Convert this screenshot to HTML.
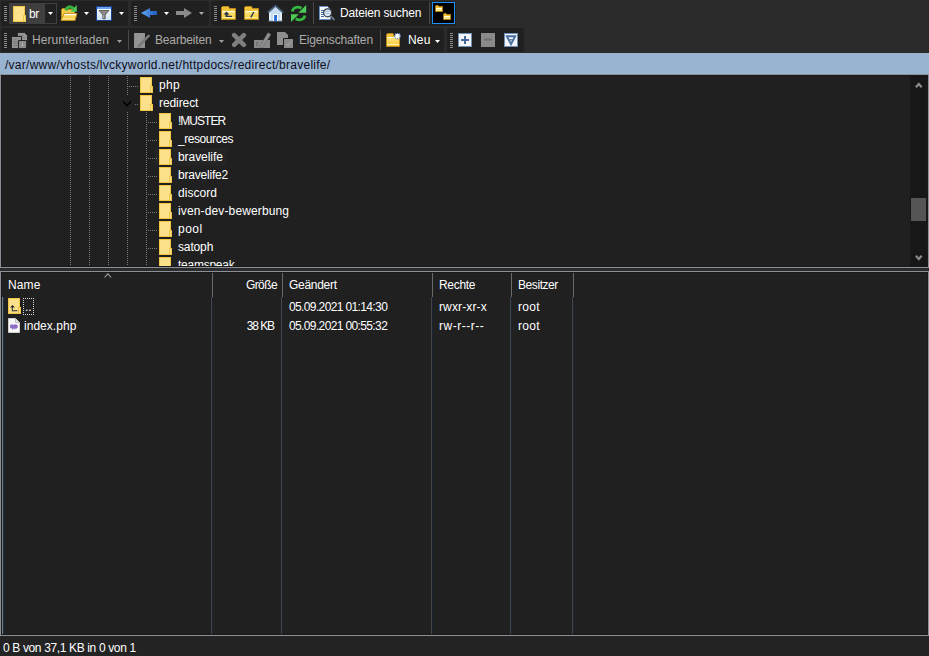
<!DOCTYPE html>
<html><head><meta charset="utf-8"><style>
html,body{margin:0;padding:0}
body{width:929px;height:656px;position:relative;overflow:hidden;background:#2b2b2b;font-family:"Liberation Sans",sans-serif;font-size:12px;color:#ffffff}
.t{position:absolute;white-space:nowrap;line-height:17px}
svg{display:block}
</style></head><body>
<div style="position:absolute;left:1px;top:1px;width:127px;height:25px;background:#202020;border-radius:3px"></div><svg style="position:absolute;left:4px;top:6px" width="3" height="16" viewBox="0 0 3 16"><rect x="0" y="0" width="3" height="1" fill="#8a8a8a"/><rect x="0" y="2" width="3" height="1" fill="#8a8a8a"/><rect x="0" y="4" width="3" height="1" fill="#8a8a8a"/><rect x="0" y="6" width="3" height="1" fill="#8a8a8a"/><rect x="0" y="8" width="3" height="1" fill="#8a8a8a"/><rect x="0" y="10" width="3" height="1" fill="#8a8a8a"/><rect x="0" y="12" width="3" height="1" fill="#8a8a8a"/><rect x="0" y="14" width="3" height="1" fill="#8a8a8a"/></svg><div style="position:absolute;left:9px;top:3px;width:48px;height:21px;background:#3f3f3f"></div><div style="position:absolute;left:45px;top:4px;width:11px;height:19px;background:#212121"></div><svg style="position:absolute;left:13px;top:6px" width="13" height="16" viewBox="0 0 13 16"><rect x="0.5" y="0.5" width="12" height="16" fill="none"/><rect x="0" y="0" width="12" height="16" fill="#141420" opacity="0.0"/><rect x="0" y="0" width="12" height="16" fill="#f4c843"/><rect x="1" y="1" width="10" height="14" fill="#fde28c"/><rect x="10" y="9" width="3" height="7" fill="#f0c848"/><rect x="11" y="10" width="1" height="5" fill="#fde28c"/></svg><div class="t" style="left:29px;top:6px;;letter-spacing:-0.3px">br</div><svg style="position:absolute;left:48px;top:12px" width="5" height="3" viewBox="0 0 5 3"><path d="M0 0H5L2.5 3Z" fill="#ffffff"/></svg><svg style="position:absolute;left:60px;top:5px" width="18" height="17" viewBox="0 0 18 17"><defs><linearGradient id="gof" x1="0" y1="0" x2="0" y2="1"><stop offset="0" stop-color="#ffe680"/><stop offset="1" stop-color="#f2c028"/></linearGradient></defs><path d="M1.5 4.5L2.5 3.5H7L8 4.5H14.5V15.5H1.5Z" fill="#f4cc48" stroke="#b8881a"/><path d="M4 8.5H17L15 15.5H1Z" fill="url(#gof)" stroke="#c08e18"/><path d="M4.5 9.5H16" stroke="#ffffff" stroke-width="1.2"/><path d="M2 14H14.5" stroke="#fff0a8"/><path d="M6 5.5C6.5 1.8 10.5 0.3 13.5 3.8" stroke="#36b040" stroke-width="3.2" fill="none"/><path d="M16.8 0V6.8H10.3Z" fill="#4cc456"/></svg><svg style="position:absolute;left:84px;top:12px" width="5" height="3" viewBox="0 0 5 3"><path d="M0 0H5L2.5 3Z" fill="#ffffff"/></svg><svg style="position:absolute;left:96px;top:6px" width="16" height="15" viewBox="0 0 16 15"><defs><linearGradient id="gfl" x1="0" y1="0" x2="0" y2="1"><stop offset="0" stop-color="#ffffff"/><stop offset="1" stop-color="#cfe0f6"/></linearGradient></defs><rect x="0.5" y="0.5" width="15" height="14" fill="url(#gfl)" stroke="#173f8c"/><rect x="1" y="1" width="14" height="2" fill="#6aa4ee"/><path d="M3 4.5H13L9.2 8.8V12.8H6.8V8.8Z" fill="#8a8a8a" stroke="#505050" stroke-width="0.8"/><path d="M7.5 9.5V12" stroke="#b0b0b0"/></svg><svg style="position:absolute;left:119px;top:12px" width="5" height="3" viewBox="0 0 5 3"><path d="M0 0H5L2.5 3Z" fill="#ffffff"/></svg><div style="position:absolute;left:131px;top:1px;width:78px;height:25px;background:#202020;border-radius:3px"></div><svg style="position:absolute;left:134px;top:6px" width="3" height="16" viewBox="0 0 3 16"><rect x="0" y="0" width="3" height="1" fill="#8a8a8a"/><rect x="0" y="2" width="3" height="1" fill="#8a8a8a"/><rect x="0" y="4" width="3" height="1" fill="#8a8a8a"/><rect x="0" y="6" width="3" height="1" fill="#8a8a8a"/><rect x="0" y="8" width="3" height="1" fill="#8a8a8a"/><rect x="0" y="10" width="3" height="1" fill="#8a8a8a"/><rect x="0" y="12" width="3" height="1" fill="#8a8a8a"/><rect x="0" y="14" width="3" height="1" fill="#8a8a8a"/></svg><svg style="position:absolute;left:141px;top:8px" width="17" height="11" viewBox="0 0 17 11"><defs><linearGradient id="gba" x1="0" y1="0" x2="1" y2="0"><stop offset="0" stop-color="#62a8f6"/><stop offset="1" stop-color="#1e5cb8"/></linearGradient></defs><path d="M0 5L9 0V3H16V7H9V10Z" fill="url(#gba)"/></svg><svg style="position:absolute;left:164px;top:12px" width="5" height="3" viewBox="0 0 5 3"><path d="M0 0H5L2.5 3Z" fill="#ffffff"/></svg><svg style="position:absolute;left:176px;top:8px" width="17" height="11" viewBox="0 0 17 11"><path d="M16 5L8 0V3H0V7H8V10Z" fill="#8a8a8a"/></svg><svg style="position:absolute;left:199px;top:12px" width="5" height="3" viewBox="0 0 5 3"><path d="M0 0H5L2.5 3Z" fill="#a8a8a8"/></svg><div style="position:absolute;left:211px;top:1px;width:245px;height:25px;background:#202020;border-radius:3px"></div><svg style="position:absolute;left:214px;top:6px" width="3" height="16" viewBox="0 0 3 16"><rect x="0" y="0" width="3" height="1" fill="#8a8a8a"/><rect x="0" y="2" width="3" height="1" fill="#8a8a8a"/><rect x="0" y="4" width="3" height="1" fill="#8a8a8a"/><rect x="0" y="6" width="3" height="1" fill="#8a8a8a"/><rect x="0" y="8" width="3" height="1" fill="#8a8a8a"/><rect x="0" y="10" width="3" height="1" fill="#8a8a8a"/><rect x="0" y="12" width="3" height="1" fill="#8a8a8a"/><rect x="0" y="14" width="3" height="1" fill="#8a8a8a"/></svg><svg style="position:absolute;left:221px;top:6px" width="15" height="14" viewBox="0 0 15 14"><defs><linearGradient id="gfd1" x1="0" y1="0" x2="0" y2="1"><stop offset="0" stop-color="#fde88a"/><stop offset="1" stop-color="#f5c830"/></linearGradient></defs><path d="M0.5 1.5L1.5 0.5H7.5L8.5 2.5H14.5V13.5H0.5Z" fill="#f2c23a" stroke="#b8881a"/><rect x="1" y="5" width="13" height="8" fill="url(#gfd1)"/><rect x="1" y="5" width="13" height="1" fill="#fffbe8"/><rect x="1" y="11" width="13" height="1" fill="#fff2b0"/><path d="M5.5 5.5L2.5 8.5H4.5V11H11V9.8H6.5V8.5H8.5Z" fill="#2a3448"/></svg><svg style="position:absolute;left:244px;top:6px" width="15" height="14" viewBox="0 0 15 14"><defs><linearGradient id="gfd2" x1="0" y1="0" x2="0" y2="1"><stop offset="0" stop-color="#fde88a"/><stop offset="1" stop-color="#f5c830"/></linearGradient></defs><path d="M0.5 1.5L1.5 0.5H7.5L8.5 2.5H14.5V13.5H0.5Z" fill="#f2c23a" stroke="#b8881a"/><rect x="1" y="5" width="13" height="8" fill="url(#gfd2)"/><rect x="1" y="5" width="13" height="1" fill="#fffbe8"/><rect x="1" y="11" width="13" height="1" fill="#fff2b0"/><path d="M9.8 6L6.8 11.3" stroke="#2a3448" stroke-width="1.4"/></svg><svg style="position:absolute;left:267px;top:5px" width="17" height="17" viewBox="0 0 17 17"><path d="M8.5 1.5L2 7.5V16H15V7.5Z" fill="#c8dcf2"/><path d="M3 8V15.5H14V8" stroke="#ffffff" fill="none"/><path d="M0.8 7.5L8.5 0.8L16.2 7.5" stroke="#4a6280" stroke-width="1.6" fill="none"/><rect x="1.5" y="15.5" width="14" height="1" fill="#6a88a8"/><rect x="6" y="9" width="5" height="7" fill="#ffffff"/><rect x="7" y="10" width="3" height="6" fill="#2f73d8"/></svg><svg style="position:absolute;left:290px;top:5px" width="17" height="17" viewBox="0 0 17 17"><path d="M2.3 6.5C3 2.5 7.5 1 11.5 3.2" stroke="#34b840" stroke-width="2.8" fill="none"/><path d="M16.2 0V7.8H8.4Z" fill="#4ccc56"/><g transform="rotate(180 8.6 8.5)"><path d="M2.3 6.5C3 2.5 7.5 1 11.5 3.2" stroke="#34b840" stroke-width="2.8" fill="none"/><path d="M16.2 0V7.8H8.4Z" fill="#4ccc56"/></g></svg><div style="position:absolute;left:313px;top:2px;width:1px;height:22px;background:#4a4a4a"></div><svg style="position:absolute;left:319px;top:5px" width="17" height="17" viewBox="0 0 17 17"><path d="M0.5 1.5H8.5L11.5 4.5V14.5H0.5Z" fill="#f6f9fd" stroke="#6a90c2"/><path d="M2 5.5H5M2 7.5H5M2 9.5H5M2 11.5H5" stroke="#3a6aa8"/><circle cx="8.6" cy="7.8" r="4" fill="#dce9f8" stroke="#343c48" stroke-width="1.2"/><path d="M6.5 6.5H10.5M6.5 8.5H10.5" stroke="#a8bcd0"/><path d="M11.8 11.2L15.5 15" stroke="#6a7888" stroke-width="1.8"/></svg><div class="t" style="left:340px;top:5px;;letter-spacing:-0.154px">Dateien suchen</div><div style="position:absolute;left:429px;top:2px;width:1px;height:22px;background:#4a4a4a"></div><div style="position:absolute;left:432px;top:2px;width:23px;height:22px;background:#000;box-sizing:border-box;border:1px solid #1e8fff"></div><svg style="position:absolute;left:435px;top:5px" width="8" height="7" viewBox="0 0 8 7"><path d="M0.5 1.5L1 0.5H3L4 1.5H7.5V6.5H0.5Z" fill="#f0c030" stroke="#b08018"/><rect x="1" y="3" width="6" height="3" fill="#fde888"/><rect x="1" y="3" width="6" height="1" fill="#fffbe0"/></svg><svg style="position:absolute;left:443px;top:13px" width="8" height="7" viewBox="0 0 8 7"><path d="M0.5 1.5L1 0.5H3L4 1.5H7.5V6.5H0.5Z" fill="#f0c030" stroke="#b08018"/><rect x="1" y="3" width="6" height="3" fill="#fde888"/><rect x="1" y="3" width="6" height="1" fill="#fffbe0"/></svg><div style="position:absolute;left:1px;top:28px;width:443px;height:24px;background:#202020;border-radius:3px"></div><svg style="position:absolute;left:4px;top:33px" width="3" height="16" viewBox="0 0 3 16"><rect x="0" y="0" width="3" height="1" fill="#8a8a8a"/><rect x="0" y="2" width="3" height="1" fill="#8a8a8a"/><rect x="0" y="4" width="3" height="1" fill="#8a8a8a"/><rect x="0" y="6" width="3" height="1" fill="#8a8a8a"/><rect x="0" y="8" width="3" height="1" fill="#8a8a8a"/><rect x="0" y="10" width="3" height="1" fill="#8a8a8a"/><rect x="0" y="12" width="3" height="1" fill="#8a8a8a"/><rect x="0" y="14" width="3" height="1" fill="#8a8a8a"/></svg><svg style="position:absolute;left:11px;top:32px" width="17" height="17" viewBox="0 0 17 17"><path d="M6.5 0.5H13.5L16.5 3.5V12.5H6.5Z" fill="#969696" stroke="#262626"/><path d="M8.5 3.5H12.5M8.5 5.5H14.5" stroke="#7c7c7c"/><path d="M0.5 4.5H10.5V16.5H0.5Z" fill="#929292" stroke="#262626"/><path d="M2.5 7.5H5.5M2.5 9.5H7.5M2.5 11.5H7.5M2.5 13.5H7.5" stroke="#7a7a7a"/><path d="M7.5 8.5H15.5V16.5H7.5Z" fill="#8a8a8a" stroke="#262626"/><path d="M11.5 10V14M9.8 12.5L11.5 14.2L13.2 12.5" stroke="#a8a8a8" fill="none"/></svg><div class="t" style="left:32px;top:32px;color:#ababab;letter-spacing:0.083px">Herunterladen</div><svg style="position:absolute;left:117px;top:40px" width="5" height="3" viewBox="0 0 5 3"><path d="M0 0H5L2.5 3Z" fill="#a0a0a0"/></svg><div style="position:absolute;left:128px;top:30px;width:1px;height:20px;background:#4a4a4a"></div><svg style="position:absolute;left:134px;top:32px" width="17" height="17" viewBox="0 0 17 17"><path d="M0 1H11V16H0Z" fill="#8e8e8e"/><path d="M1 1H10V15H1Z" fill="#949494"/><path d="M4.5 13L14.5 2.5L16 4L6 14.5L4 15Z" fill="#7e7e7e" stroke="#6a6a6a" stroke-width="0.6"/></svg><div class="t" style="left:155px;top:32px;color:#ababab;letter-spacing:-0.156px">Bearbeiten</div><svg style="position:absolute;left:219px;top:40px" width="5" height="3" viewBox="0 0 5 3"><path d="M0 0H5L2.5 3Z" fill="#a0a0a0"/></svg><svg style="position:absolute;left:231px;top:32px" width="16" height="16" viewBox="0 0 16 16"><path d="M3.2 3.2L12.8 12.8M12.8 3.2L3.2 12.8" stroke="#7e7e7e" stroke-width="4.6" stroke-linecap="round"/></svg><svg style="position:absolute;left:254px;top:32px" width="17" height="17" viewBox="0 0 17 17"><path d="M0 8H16V16H0Z" fill="#8a8a8a"/><path d="M5.5 15L14 0.8L16.8 2.4L8.3 16Z" fill="#909090" stroke="#6e6e6e" stroke-width="0.7"/><path d="M3 10.5V13.5M2 10.5H4M2 13.5H4" stroke="#6a6a6a"/></svg><svg style="position:absolute;left:277px;top:32px" width="17" height="17" viewBox="0 0 17 17"><path d="M0 0H8L11 3V13H0Z" fill="#8e8e8e"/><path d="M6.5 6.5H16.5V16.5H6.5Z" fill="#8a8a8a" stroke="#1e1e1e"/><path d="M9 11.5L11 13.5L14.5 9" stroke="#a8a8a8" fill="none"/></svg><div class="t" style="left:299px;top:32px;color:#ababab;letter-spacing:-0.167px">Eigenschaften</div><div style="position:absolute;left:380px;top:30px;width:1px;height:20px;background:#4a4a4a"></div><svg style="position:absolute;left:385px;top:33px" width="17" height="15" viewBox="0 0 17 15"><defs><linearGradient id="gnf" x1="0" y1="0" x2="0" y2="1"><stop offset="0" stop-color="#fde88a"/><stop offset="1" stop-color="#f5c830"/></linearGradient></defs><path d="M1.5 1.5L2.5 0.5H8L9 3.5H14.5V13.5H1.5Z" fill="#f2c23a" stroke="#b8881a"/><rect x="2" y="4" width="12" height="9" fill="url(#gnf)"/><rect x="2" y="4" width="12" height="1" fill="#fffbe8"/><rect x="2" y="11" width="12" height="1" fill="#fff2b0"/><path d="M12.5 -0.5V6.5M9 3H16M10 0.5L15 5.5M15 0.5L10 5.5" stroke="#6f94c4" stroke-width="1.3"/><circle cx="12.5" cy="3" r="2.3" fill="#ffffff"/></svg><div class="t" style="left:408px;top:32px;;letter-spacing:0.2px">Neu</div><svg style="position:absolute;left:435px;top:40px" width="5" height="3" viewBox="0 0 5 3"><path d="M0 0H5L2.5 3Z" fill="#ffffff"/></svg><div style="position:absolute;left:447px;top:28px;width:77px;height:24px;background:#202020;border-radius:3px"></div><svg style="position:absolute;left:450px;top:33px" width="3" height="16" viewBox="0 0 3 16"><rect x="0" y="0" width="3" height="1" fill="#8a8a8a"/><rect x="0" y="2" width="3" height="1" fill="#8a8a8a"/><rect x="0" y="4" width="3" height="1" fill="#8a8a8a"/><rect x="0" y="6" width="3" height="1" fill="#8a8a8a"/><rect x="0" y="8" width="3" height="1" fill="#8a8a8a"/><rect x="0" y="10" width="3" height="1" fill="#8a8a8a"/><rect x="0" y="12" width="3" height="1" fill="#8a8a8a"/><rect x="0" y="14" width="3" height="1" fill="#8a8a8a"/></svg><svg style="position:absolute;left:458px;top:33px" width="14" height="14" viewBox="0 0 14 14"><rect x="0.5" y="0.5" width="13" height="13" fill="#f2f6fc" stroke="#7090b8"/><path d="M7 3V11M3 7H11" stroke="#44699a" stroke-width="2"/></svg><svg style="position:absolute;left:481px;top:33px" width="14" height="14" viewBox="0 0 14 14"><rect x="0" y="0" width="14" height="14" fill="#8a8a8a"/><path d="M3 6.5H11" stroke="#6e6e6e" stroke-width="2"/></svg><svg style="position:absolute;left:504px;top:33px" width="14" height="14" viewBox="0 0 14 14"><rect x="0.5" y="0.5" width="13" height="13" fill="#f2f6fc" stroke="#7090b8"/><path d="M2.8 3.3H11.2L7 11.2Z" fill="none" stroke="#4a6e9e" stroke-width="1.9" stroke-linejoin="miter"/><path d="M5.2 6.8H8.8" stroke="#4a6e9e" stroke-width="1.3"/></svg><div style="position:absolute;left:0px;top:53px;width:929px;height:21px;background:#99b4d1"></div><div class="t" style="left:5px;top:57px;color:#0c0c1a;letter-spacing:0.259px">/var/www/vhosts/lvckyworld.net/httpdocs/redirect/bravelife/</div><div style="position:absolute;left:0px;top:74px;width:929px;height:194px;box-sizing:border-box;border:1px solid #8b9098;background:#1a1a1a"></div><div style="position:absolute;left:2px;top:76px;width:908px;height:190px;background:#202020"></div><div style="position:absolute;left:910px;top:76px;width:17px;height:190px;background:#171717"></div><svg style="position:absolute;left:915px;top:82px" width="8" height="6" viewBox="0 0 8 6"><path d="M0.9 5.2L3.8 2L6.7 5.2" stroke="#8a8a8a" stroke-width="2.2" fill="none"/></svg><svg style="position:absolute;left:915px;top:255px" width="8" height="6" viewBox="0 0 8 6"><path d="M0.9 0.8L3.8 4L6.7 0.8" stroke="#8a8a8a" stroke-width="2.2" fill="none"/></svg><div style="position:absolute;left:911px;top:198px;width:15px;height:23px;background:#555555"></div><div style="position:absolute;left:2px;top:76px;width:908px;height:190px;overflow:hidden"><svg style="position:absolute;left:68px;top:0px" width="1" height="190"><rect x="0" y="0" width="1" height="1" fill="#7a7a7a"/><rect x="0" y="2" width="1" height="1" fill="#7a7a7a"/><rect x="0" y="4" width="1" height="1" fill="#7a7a7a"/><rect x="0" y="6" width="1" height="1" fill="#7a7a7a"/><rect x="0" y="8" width="1" height="1" fill="#7a7a7a"/><rect x="0" y="10" width="1" height="1" fill="#7a7a7a"/><rect x="0" y="12" width="1" height="1" fill="#7a7a7a"/><rect x="0" y="14" width="1" height="1" fill="#7a7a7a"/><rect x="0" y="16" width="1" height="1" fill="#7a7a7a"/><rect x="0" y="18" width="1" height="1" fill="#7a7a7a"/><rect x="0" y="20" width="1" height="1" fill="#7a7a7a"/><rect x="0" y="22" width="1" height="1" fill="#7a7a7a"/><rect x="0" y="24" width="1" height="1" fill="#7a7a7a"/><rect x="0" y="26" width="1" height="1" fill="#7a7a7a"/><rect x="0" y="28" width="1" height="1" fill="#7a7a7a"/><rect x="0" y="30" width="1" height="1" fill="#7a7a7a"/><rect x="0" y="32" width="1" height="1" fill="#7a7a7a"/><rect x="0" y="34" width="1" height="1" fill="#7a7a7a"/><rect x="0" y="36" width="1" height="1" fill="#7a7a7a"/><rect x="0" y="38" width="1" height="1" fill="#7a7a7a"/><rect x="0" y="40" width="1" height="1" fill="#7a7a7a"/><rect x="0" y="42" width="1" height="1" fill="#7a7a7a"/><rect x="0" y="44" width="1" height="1" fill="#7a7a7a"/><rect x="0" y="46" width="1" height="1" fill="#7a7a7a"/><rect x="0" y="48" width="1" height="1" fill="#7a7a7a"/><rect x="0" y="50" width="1" height="1" fill="#7a7a7a"/><rect x="0" y="52" width="1" height="1" fill="#7a7a7a"/><rect x="0" y="54" width="1" height="1" fill="#7a7a7a"/><rect x="0" y="56" width="1" height="1" fill="#7a7a7a"/><rect x="0" y="58" width="1" height="1" fill="#7a7a7a"/><rect x="0" y="60" width="1" height="1" fill="#7a7a7a"/><rect x="0" y="62" width="1" height="1" fill="#7a7a7a"/><rect x="0" y="64" width="1" height="1" fill="#7a7a7a"/><rect x="0" y="66" width="1" height="1" fill="#7a7a7a"/><rect x="0" y="68" width="1" height="1" fill="#7a7a7a"/><rect x="0" y="70" width="1" height="1" fill="#7a7a7a"/><rect x="0" y="72" width="1" height="1" fill="#7a7a7a"/><rect x="0" y="74" width="1" height="1" fill="#7a7a7a"/><rect x="0" y="76" width="1" height="1" fill="#7a7a7a"/><rect x="0" y="78" width="1" height="1" fill="#7a7a7a"/><rect x="0" y="80" width="1" height="1" fill="#7a7a7a"/><rect x="0" y="82" width="1" height="1" fill="#7a7a7a"/><rect x="0" y="84" width="1" height="1" fill="#7a7a7a"/><rect x="0" y="86" width="1" height="1" fill="#7a7a7a"/><rect x="0" y="88" width="1" height="1" fill="#7a7a7a"/><rect x="0" y="90" width="1" height="1" fill="#7a7a7a"/><rect x="0" y="92" width="1" height="1" fill="#7a7a7a"/><rect x="0" y="94" width="1" height="1" fill="#7a7a7a"/><rect x="0" y="96" width="1" height="1" fill="#7a7a7a"/><rect x="0" y="98" width="1" height="1" fill="#7a7a7a"/><rect x="0" y="100" width="1" height="1" fill="#7a7a7a"/><rect x="0" y="102" width="1" height="1" fill="#7a7a7a"/><rect x="0" y="104" width="1" height="1" fill="#7a7a7a"/><rect x="0" y="106" width="1" height="1" fill="#7a7a7a"/><rect x="0" y="108" width="1" height="1" fill="#7a7a7a"/><rect x="0" y="110" width="1" height="1" fill="#7a7a7a"/><rect x="0" y="112" width="1" height="1" fill="#7a7a7a"/><rect x="0" y="114" width="1" height="1" fill="#7a7a7a"/><rect x="0" y="116" width="1" height="1" fill="#7a7a7a"/><rect x="0" y="118" width="1" height="1" fill="#7a7a7a"/><rect x="0" y="120" width="1" height="1" fill="#7a7a7a"/><rect x="0" y="122" width="1" height="1" fill="#7a7a7a"/><rect x="0" y="124" width="1" height="1" fill="#7a7a7a"/><rect x="0" y="126" width="1" height="1" fill="#7a7a7a"/><rect x="0" y="128" width="1" height="1" fill="#7a7a7a"/><rect x="0" y="130" width="1" height="1" fill="#7a7a7a"/><rect x="0" y="132" width="1" height="1" fill="#7a7a7a"/><rect x="0" y="134" width="1" height="1" fill="#7a7a7a"/><rect x="0" y="136" width="1" height="1" fill="#7a7a7a"/><rect x="0" y="138" width="1" height="1" fill="#7a7a7a"/><rect x="0" y="140" width="1" height="1" fill="#7a7a7a"/><rect x="0" y="142" width="1" height="1" fill="#7a7a7a"/><rect x="0" y="144" width="1" height="1" fill="#7a7a7a"/><rect x="0" y="146" width="1" height="1" fill="#7a7a7a"/><rect x="0" y="148" width="1" height="1" fill="#7a7a7a"/><rect x="0" y="150" width="1" height="1" fill="#7a7a7a"/><rect x="0" y="152" width="1" height="1" fill="#7a7a7a"/><rect x="0" y="154" width="1" height="1" fill="#7a7a7a"/><rect x="0" y="156" width="1" height="1" fill="#7a7a7a"/><rect x="0" y="158" width="1" height="1" fill="#7a7a7a"/><rect x="0" y="160" width="1" height="1" fill="#7a7a7a"/><rect x="0" y="162" width="1" height="1" fill="#7a7a7a"/><rect x="0" y="164" width="1" height="1" fill="#7a7a7a"/><rect x="0" y="166" width="1" height="1" fill="#7a7a7a"/><rect x="0" y="168" width="1" height="1" fill="#7a7a7a"/><rect x="0" y="170" width="1" height="1" fill="#7a7a7a"/><rect x="0" y="172" width="1" height="1" fill="#7a7a7a"/><rect x="0" y="174" width="1" height="1" fill="#7a7a7a"/><rect x="0" y="176" width="1" height="1" fill="#7a7a7a"/><rect x="0" y="178" width="1" height="1" fill="#7a7a7a"/><rect x="0" y="180" width="1" height="1" fill="#7a7a7a"/><rect x="0" y="182" width="1" height="1" fill="#7a7a7a"/><rect x="0" y="184" width="1" height="1" fill="#7a7a7a"/><rect x="0" y="186" width="1" height="1" fill="#7a7a7a"/><rect x="0" y="188" width="1" height="1" fill="#7a7a7a"/></svg><svg style="position:absolute;left:87px;top:0px" width="1" height="190"><rect x="0" y="0" width="1" height="1" fill="#7a7a7a"/><rect x="0" y="2" width="1" height="1" fill="#7a7a7a"/><rect x="0" y="4" width="1" height="1" fill="#7a7a7a"/><rect x="0" y="6" width="1" height="1" fill="#7a7a7a"/><rect x="0" y="8" width="1" height="1" fill="#7a7a7a"/><rect x="0" y="10" width="1" height="1" fill="#7a7a7a"/><rect x="0" y="12" width="1" height="1" fill="#7a7a7a"/><rect x="0" y="14" width="1" height="1" fill="#7a7a7a"/><rect x="0" y="16" width="1" height="1" fill="#7a7a7a"/><rect x="0" y="18" width="1" height="1" fill="#7a7a7a"/><rect x="0" y="20" width="1" height="1" fill="#7a7a7a"/><rect x="0" y="22" width="1" height="1" fill="#7a7a7a"/><rect x="0" y="24" width="1" height="1" fill="#7a7a7a"/><rect x="0" y="26" width="1" height="1" fill="#7a7a7a"/><rect x="0" y="28" width="1" height="1" fill="#7a7a7a"/><rect x="0" y="30" width="1" height="1" fill="#7a7a7a"/><rect x="0" y="32" width="1" height="1" fill="#7a7a7a"/><rect x="0" y="34" width="1" height="1" fill="#7a7a7a"/><rect x="0" y="36" width="1" height="1" fill="#7a7a7a"/><rect x="0" y="38" width="1" height="1" fill="#7a7a7a"/><rect x="0" y="40" width="1" height="1" fill="#7a7a7a"/><rect x="0" y="42" width="1" height="1" fill="#7a7a7a"/><rect x="0" y="44" width="1" height="1" fill="#7a7a7a"/><rect x="0" y="46" width="1" height="1" fill="#7a7a7a"/><rect x="0" y="48" width="1" height="1" fill="#7a7a7a"/><rect x="0" y="50" width="1" height="1" fill="#7a7a7a"/><rect x="0" y="52" width="1" height="1" fill="#7a7a7a"/><rect x="0" y="54" width="1" height="1" fill="#7a7a7a"/><rect x="0" y="56" width="1" height="1" fill="#7a7a7a"/><rect x="0" y="58" width="1" height="1" fill="#7a7a7a"/><rect x="0" y="60" width="1" height="1" fill="#7a7a7a"/><rect x="0" y="62" width="1" height="1" fill="#7a7a7a"/><rect x="0" y="64" width="1" height="1" fill="#7a7a7a"/><rect x="0" y="66" width="1" height="1" fill="#7a7a7a"/><rect x="0" y="68" width="1" height="1" fill="#7a7a7a"/><rect x="0" y="70" width="1" height="1" fill="#7a7a7a"/><rect x="0" y="72" width="1" height="1" fill="#7a7a7a"/><rect x="0" y="74" width="1" height="1" fill="#7a7a7a"/><rect x="0" y="76" width="1" height="1" fill="#7a7a7a"/><rect x="0" y="78" width="1" height="1" fill="#7a7a7a"/><rect x="0" y="80" width="1" height="1" fill="#7a7a7a"/><rect x="0" y="82" width="1" height="1" fill="#7a7a7a"/><rect x="0" y="84" width="1" height="1" fill="#7a7a7a"/><rect x="0" y="86" width="1" height="1" fill="#7a7a7a"/><rect x="0" y="88" width="1" height="1" fill="#7a7a7a"/><rect x="0" y="90" width="1" height="1" fill="#7a7a7a"/><rect x="0" y="92" width="1" height="1" fill="#7a7a7a"/><rect x="0" y="94" width="1" height="1" fill="#7a7a7a"/><rect x="0" y="96" width="1" height="1" fill="#7a7a7a"/><rect x="0" y="98" width="1" height="1" fill="#7a7a7a"/><rect x="0" y="100" width="1" height="1" fill="#7a7a7a"/><rect x="0" y="102" width="1" height="1" fill="#7a7a7a"/><rect x="0" y="104" width="1" height="1" fill="#7a7a7a"/><rect x="0" y="106" width="1" height="1" fill="#7a7a7a"/><rect x="0" y="108" width="1" height="1" fill="#7a7a7a"/><rect x="0" y="110" width="1" height="1" fill="#7a7a7a"/><rect x="0" y="112" width="1" height="1" fill="#7a7a7a"/><rect x="0" y="114" width="1" height="1" fill="#7a7a7a"/><rect x="0" y="116" width="1" height="1" fill="#7a7a7a"/><rect x="0" y="118" width="1" height="1" fill="#7a7a7a"/><rect x="0" y="120" width="1" height="1" fill="#7a7a7a"/><rect x="0" y="122" width="1" height="1" fill="#7a7a7a"/><rect x="0" y="124" width="1" height="1" fill="#7a7a7a"/><rect x="0" y="126" width="1" height="1" fill="#7a7a7a"/><rect x="0" y="128" width="1" height="1" fill="#7a7a7a"/><rect x="0" y="130" width="1" height="1" fill="#7a7a7a"/><rect x="0" y="132" width="1" height="1" fill="#7a7a7a"/><rect x="0" y="134" width="1" height="1" fill="#7a7a7a"/><rect x="0" y="136" width="1" height="1" fill="#7a7a7a"/><rect x="0" y="138" width="1" height="1" fill="#7a7a7a"/><rect x="0" y="140" width="1" height="1" fill="#7a7a7a"/><rect x="0" y="142" width="1" height="1" fill="#7a7a7a"/><rect x="0" y="144" width="1" height="1" fill="#7a7a7a"/><rect x="0" y="146" width="1" height="1" fill="#7a7a7a"/><rect x="0" y="148" width="1" height="1" fill="#7a7a7a"/><rect x="0" y="150" width="1" height="1" fill="#7a7a7a"/><rect x="0" y="152" width="1" height="1" fill="#7a7a7a"/><rect x="0" y="154" width="1" height="1" fill="#7a7a7a"/><rect x="0" y="156" width="1" height="1" fill="#7a7a7a"/><rect x="0" y="158" width="1" height="1" fill="#7a7a7a"/><rect x="0" y="160" width="1" height="1" fill="#7a7a7a"/><rect x="0" y="162" width="1" height="1" fill="#7a7a7a"/><rect x="0" y="164" width="1" height="1" fill="#7a7a7a"/><rect x="0" y="166" width="1" height="1" fill="#7a7a7a"/><rect x="0" y="168" width="1" height="1" fill="#7a7a7a"/><rect x="0" y="170" width="1" height="1" fill="#7a7a7a"/><rect x="0" y="172" width="1" height="1" fill="#7a7a7a"/><rect x="0" y="174" width="1" height="1" fill="#7a7a7a"/><rect x="0" y="176" width="1" height="1" fill="#7a7a7a"/><rect x="0" y="178" width="1" height="1" fill="#7a7a7a"/><rect x="0" y="180" width="1" height="1" fill="#7a7a7a"/><rect x="0" y="182" width="1" height="1" fill="#7a7a7a"/><rect x="0" y="184" width="1" height="1" fill="#7a7a7a"/><rect x="0" y="186" width="1" height="1" fill="#7a7a7a"/><rect x="0" y="188" width="1" height="1" fill="#7a7a7a"/></svg><svg style="position:absolute;left:106px;top:0px" width="1" height="190"><rect x="0" y="0" width="1" height="1" fill="#7a7a7a"/><rect x="0" y="2" width="1" height="1" fill="#7a7a7a"/><rect x="0" y="4" width="1" height="1" fill="#7a7a7a"/><rect x="0" y="6" width="1" height="1" fill="#7a7a7a"/><rect x="0" y="8" width="1" height="1" fill="#7a7a7a"/><rect x="0" y="10" width="1" height="1" fill="#7a7a7a"/><rect x="0" y="12" width="1" height="1" fill="#7a7a7a"/><rect x="0" y="14" width="1" height="1" fill="#7a7a7a"/><rect x="0" y="16" width="1" height="1" fill="#7a7a7a"/><rect x="0" y="18" width="1" height="1" fill="#7a7a7a"/><rect x="0" y="20" width="1" height="1" fill="#7a7a7a"/><rect x="0" y="22" width="1" height="1" fill="#7a7a7a"/><rect x="0" y="24" width="1" height="1" fill="#7a7a7a"/><rect x="0" y="26" width="1" height="1" fill="#7a7a7a"/><rect x="0" y="28" width="1" height="1" fill="#7a7a7a"/><rect x="0" y="30" width="1" height="1" fill="#7a7a7a"/><rect x="0" y="32" width="1" height="1" fill="#7a7a7a"/><rect x="0" y="34" width="1" height="1" fill="#7a7a7a"/><rect x="0" y="36" width="1" height="1" fill="#7a7a7a"/><rect x="0" y="38" width="1" height="1" fill="#7a7a7a"/><rect x="0" y="40" width="1" height="1" fill="#7a7a7a"/><rect x="0" y="42" width="1" height="1" fill="#7a7a7a"/><rect x="0" y="44" width="1" height="1" fill="#7a7a7a"/><rect x="0" y="46" width="1" height="1" fill="#7a7a7a"/><rect x="0" y="48" width="1" height="1" fill="#7a7a7a"/><rect x="0" y="50" width="1" height="1" fill="#7a7a7a"/><rect x="0" y="52" width="1" height="1" fill="#7a7a7a"/><rect x="0" y="54" width="1" height="1" fill="#7a7a7a"/><rect x="0" y="56" width="1" height="1" fill="#7a7a7a"/><rect x="0" y="58" width="1" height="1" fill="#7a7a7a"/><rect x="0" y="60" width="1" height="1" fill="#7a7a7a"/><rect x="0" y="62" width="1" height="1" fill="#7a7a7a"/><rect x="0" y="64" width="1" height="1" fill="#7a7a7a"/><rect x="0" y="66" width="1" height="1" fill="#7a7a7a"/><rect x="0" y="68" width="1" height="1" fill="#7a7a7a"/><rect x="0" y="70" width="1" height="1" fill="#7a7a7a"/><rect x="0" y="72" width="1" height="1" fill="#7a7a7a"/><rect x="0" y="74" width="1" height="1" fill="#7a7a7a"/><rect x="0" y="76" width="1" height="1" fill="#7a7a7a"/><rect x="0" y="78" width="1" height="1" fill="#7a7a7a"/><rect x="0" y="80" width="1" height="1" fill="#7a7a7a"/><rect x="0" y="82" width="1" height="1" fill="#7a7a7a"/><rect x="0" y="84" width="1" height="1" fill="#7a7a7a"/><rect x="0" y="86" width="1" height="1" fill="#7a7a7a"/><rect x="0" y="88" width="1" height="1" fill="#7a7a7a"/><rect x="0" y="90" width="1" height="1" fill="#7a7a7a"/><rect x="0" y="92" width="1" height="1" fill="#7a7a7a"/><rect x="0" y="94" width="1" height="1" fill="#7a7a7a"/><rect x="0" y="96" width="1" height="1" fill="#7a7a7a"/><rect x="0" y="98" width="1" height="1" fill="#7a7a7a"/><rect x="0" y="100" width="1" height="1" fill="#7a7a7a"/><rect x="0" y="102" width="1" height="1" fill="#7a7a7a"/><rect x="0" y="104" width="1" height="1" fill="#7a7a7a"/><rect x="0" y="106" width="1" height="1" fill="#7a7a7a"/><rect x="0" y="108" width="1" height="1" fill="#7a7a7a"/><rect x="0" y="110" width="1" height="1" fill="#7a7a7a"/><rect x="0" y="112" width="1" height="1" fill="#7a7a7a"/><rect x="0" y="114" width="1" height="1" fill="#7a7a7a"/><rect x="0" y="116" width="1" height="1" fill="#7a7a7a"/><rect x="0" y="118" width="1" height="1" fill="#7a7a7a"/><rect x="0" y="120" width="1" height="1" fill="#7a7a7a"/><rect x="0" y="122" width="1" height="1" fill="#7a7a7a"/><rect x="0" y="124" width="1" height="1" fill="#7a7a7a"/><rect x="0" y="126" width="1" height="1" fill="#7a7a7a"/><rect x="0" y="128" width="1" height="1" fill="#7a7a7a"/><rect x="0" y="130" width="1" height="1" fill="#7a7a7a"/><rect x="0" y="132" width="1" height="1" fill="#7a7a7a"/><rect x="0" y="134" width="1" height="1" fill="#7a7a7a"/><rect x="0" y="136" width="1" height="1" fill="#7a7a7a"/><rect x="0" y="138" width="1" height="1" fill="#7a7a7a"/><rect x="0" y="140" width="1" height="1" fill="#7a7a7a"/><rect x="0" y="142" width="1" height="1" fill="#7a7a7a"/><rect x="0" y="144" width="1" height="1" fill="#7a7a7a"/><rect x="0" y="146" width="1" height="1" fill="#7a7a7a"/><rect x="0" y="148" width="1" height="1" fill="#7a7a7a"/><rect x="0" y="150" width="1" height="1" fill="#7a7a7a"/><rect x="0" y="152" width="1" height="1" fill="#7a7a7a"/><rect x="0" y="154" width="1" height="1" fill="#7a7a7a"/><rect x="0" y="156" width="1" height="1" fill="#7a7a7a"/><rect x="0" y="158" width="1" height="1" fill="#7a7a7a"/><rect x="0" y="160" width="1" height="1" fill="#7a7a7a"/><rect x="0" y="162" width="1" height="1" fill="#7a7a7a"/><rect x="0" y="164" width="1" height="1" fill="#7a7a7a"/><rect x="0" y="166" width="1" height="1" fill="#7a7a7a"/><rect x="0" y="168" width="1" height="1" fill="#7a7a7a"/><rect x="0" y="170" width="1" height="1" fill="#7a7a7a"/><rect x="0" y="172" width="1" height="1" fill="#7a7a7a"/><rect x="0" y="174" width="1" height="1" fill="#7a7a7a"/><rect x="0" y="176" width="1" height="1" fill="#7a7a7a"/><rect x="0" y="178" width="1" height="1" fill="#7a7a7a"/><rect x="0" y="180" width="1" height="1" fill="#7a7a7a"/><rect x="0" y="182" width="1" height="1" fill="#7a7a7a"/><rect x="0" y="184" width="1" height="1" fill="#7a7a7a"/><rect x="0" y="186" width="1" height="1" fill="#7a7a7a"/><rect x="0" y="188" width="1" height="1" fill="#7a7a7a"/></svg><svg style="position:absolute;left:125px;top:0px" width="1" height="20"><rect x="0" y="0" width="1" height="1" fill="#7a7a7a"/><rect x="0" y="2" width="1" height="1" fill="#7a7a7a"/><rect x="0" y="4" width="1" height="1" fill="#7a7a7a"/><rect x="0" y="6" width="1" height="1" fill="#7a7a7a"/><rect x="0" y="8" width="1" height="1" fill="#7a7a7a"/><rect x="0" y="10" width="1" height="1" fill="#7a7a7a"/><rect x="0" y="12" width="1" height="1" fill="#7a7a7a"/><rect x="0" y="14" width="1" height="1" fill="#7a7a7a"/><rect x="0" y="16" width="1" height="1" fill="#7a7a7a"/><rect x="0" y="18" width="1" height="1" fill="#7a7a7a"/></svg><svg style="position:absolute;left:125px;top:36px" width="1" height="154"><rect x="0" y="0" width="1" height="1" fill="#7a7a7a"/><rect x="0" y="2" width="1" height="1" fill="#7a7a7a"/><rect x="0" y="4" width="1" height="1" fill="#7a7a7a"/><rect x="0" y="6" width="1" height="1" fill="#7a7a7a"/><rect x="0" y="8" width="1" height="1" fill="#7a7a7a"/><rect x="0" y="10" width="1" height="1" fill="#7a7a7a"/><rect x="0" y="12" width="1" height="1" fill="#7a7a7a"/><rect x="0" y="14" width="1" height="1" fill="#7a7a7a"/><rect x="0" y="16" width="1" height="1" fill="#7a7a7a"/><rect x="0" y="18" width="1" height="1" fill="#7a7a7a"/><rect x="0" y="20" width="1" height="1" fill="#7a7a7a"/><rect x="0" y="22" width="1" height="1" fill="#7a7a7a"/><rect x="0" y="24" width="1" height="1" fill="#7a7a7a"/><rect x="0" y="26" width="1" height="1" fill="#7a7a7a"/><rect x="0" y="28" width="1" height="1" fill="#7a7a7a"/><rect x="0" y="30" width="1" height="1" fill="#7a7a7a"/><rect x="0" y="32" width="1" height="1" fill="#7a7a7a"/><rect x="0" y="34" width="1" height="1" fill="#7a7a7a"/><rect x="0" y="36" width="1" height="1" fill="#7a7a7a"/><rect x="0" y="38" width="1" height="1" fill="#7a7a7a"/><rect x="0" y="40" width="1" height="1" fill="#7a7a7a"/><rect x="0" y="42" width="1" height="1" fill="#7a7a7a"/><rect x="0" y="44" width="1" height="1" fill="#7a7a7a"/><rect x="0" y="46" width="1" height="1" fill="#7a7a7a"/><rect x="0" y="48" width="1" height="1" fill="#7a7a7a"/><rect x="0" y="50" width="1" height="1" fill="#7a7a7a"/><rect x="0" y="52" width="1" height="1" fill="#7a7a7a"/><rect x="0" y="54" width="1" height="1" fill="#7a7a7a"/><rect x="0" y="56" width="1" height="1" fill="#7a7a7a"/><rect x="0" y="58" width="1" height="1" fill="#7a7a7a"/><rect x="0" y="60" width="1" height="1" fill="#7a7a7a"/><rect x="0" y="62" width="1" height="1" fill="#7a7a7a"/><rect x="0" y="64" width="1" height="1" fill="#7a7a7a"/><rect x="0" y="66" width="1" height="1" fill="#7a7a7a"/><rect x="0" y="68" width="1" height="1" fill="#7a7a7a"/><rect x="0" y="70" width="1" height="1" fill="#7a7a7a"/><rect x="0" y="72" width="1" height="1" fill="#7a7a7a"/><rect x="0" y="74" width="1" height="1" fill="#7a7a7a"/><rect x="0" y="76" width="1" height="1" fill="#7a7a7a"/><rect x="0" y="78" width="1" height="1" fill="#7a7a7a"/><rect x="0" y="80" width="1" height="1" fill="#7a7a7a"/><rect x="0" y="82" width="1" height="1" fill="#7a7a7a"/><rect x="0" y="84" width="1" height="1" fill="#7a7a7a"/><rect x="0" y="86" width="1" height="1" fill="#7a7a7a"/><rect x="0" y="88" width="1" height="1" fill="#7a7a7a"/><rect x="0" y="90" width="1" height="1" fill="#7a7a7a"/><rect x="0" y="92" width="1" height="1" fill="#7a7a7a"/><rect x="0" y="94" width="1" height="1" fill="#7a7a7a"/><rect x="0" y="96" width="1" height="1" fill="#7a7a7a"/><rect x="0" y="98" width="1" height="1" fill="#7a7a7a"/><rect x="0" y="100" width="1" height="1" fill="#7a7a7a"/><rect x="0" y="102" width="1" height="1" fill="#7a7a7a"/><rect x="0" y="104" width="1" height="1" fill="#7a7a7a"/><rect x="0" y="106" width="1" height="1" fill="#7a7a7a"/><rect x="0" y="108" width="1" height="1" fill="#7a7a7a"/><rect x="0" y="110" width="1" height="1" fill="#7a7a7a"/><rect x="0" y="112" width="1" height="1" fill="#7a7a7a"/><rect x="0" y="114" width="1" height="1" fill="#7a7a7a"/><rect x="0" y="116" width="1" height="1" fill="#7a7a7a"/><rect x="0" y="118" width="1" height="1" fill="#7a7a7a"/><rect x="0" y="120" width="1" height="1" fill="#7a7a7a"/><rect x="0" y="122" width="1" height="1" fill="#7a7a7a"/><rect x="0" y="124" width="1" height="1" fill="#7a7a7a"/><rect x="0" y="126" width="1" height="1" fill="#7a7a7a"/><rect x="0" y="128" width="1" height="1" fill="#7a7a7a"/><rect x="0" y="130" width="1" height="1" fill="#7a7a7a"/><rect x="0" y="132" width="1" height="1" fill="#7a7a7a"/><rect x="0" y="134" width="1" height="1" fill="#7a7a7a"/><rect x="0" y="136" width="1" height="1" fill="#7a7a7a"/><rect x="0" y="138" width="1" height="1" fill="#7a7a7a"/><rect x="0" y="140" width="1" height="1" fill="#7a7a7a"/><rect x="0" y="142" width="1" height="1" fill="#7a7a7a"/><rect x="0" y="144" width="1" height="1" fill="#7a7a7a"/><rect x="0" y="146" width="1" height="1" fill="#7a7a7a"/><rect x="0" y="148" width="1" height="1" fill="#7a7a7a"/><rect x="0" y="150" width="1" height="1" fill="#7a7a7a"/><rect x="0" y="152" width="1" height="1" fill="#7a7a7a"/></svg><svg style="position:absolute;left:125px;top:10px" width="12" height="1"><rect x="0" y="0" width="1" height="1" fill="#7a7a7a"/><rect x="2" y="0" width="1" height="1" fill="#7a7a7a"/><rect x="4" y="0" width="1" height="1" fill="#7a7a7a"/><rect x="6" y="0" width="1" height="1" fill="#7a7a7a"/><rect x="8" y="0" width="1" height="1" fill="#7a7a7a"/><rect x="10" y="0" width="1" height="1" fill="#7a7a7a"/></svg><svg style="position:absolute;left:133px;top:28px" width="4" height="1"><rect x="0" y="0" width="1" height="1" fill="#7a7a7a"/><rect x="2" y="0" width="1" height="1" fill="#7a7a7a"/></svg><svg style="position:absolute;left:120px;top:25px" width="10" height="6"><path d="M1 0.5L5 4.5L9 0.5" stroke="#000" stroke-width="1.6" fill="none"/></svg><svg style="position:absolute;left:138px;top:1px" width="13" height="16"><rect x="0" y="0" width="12" height="16" fill="#f2c640"/><rect x="1" y="1" width="10" height="14" fill="#fde08a"/><rect x="10" y="9" width="3" height="7" fill="#eec54a"/><rect x="11" y="10" width="1" height="5" fill="#fde08a"/></svg><div class="t" style="left:157px;top:1px;;letter-spacing:0.35px">php</div><svg style="position:absolute;left:138px;top:19px" width="13" height="16"><rect x="0" y="0" width="12" height="16" fill="#f2c640"/><rect x="1" y="1" width="10" height="14" fill="#fde08a"/><rect x="10" y="9" width="3" height="7" fill="#eec54a"/><rect x="11" y="10" width="1" height="5" fill="#fde08a"/></svg><div class="t" style="left:157px;top:19px;;letter-spacing:-0.086px">redirect</div><svg style="position:absolute;left:144px;top:36px" width="1" height="154"><rect x="0" y="0" width="1" height="1" fill="#7a7a7a"/><rect x="0" y="2" width="1" height="1" fill="#7a7a7a"/><rect x="0" y="4" width="1" height="1" fill="#7a7a7a"/><rect x="0" y="6" width="1" height="1" fill="#7a7a7a"/><rect x="0" y="8" width="1" height="1" fill="#7a7a7a"/><rect x="0" y="10" width="1" height="1" fill="#7a7a7a"/><rect x="0" y="12" width="1" height="1" fill="#7a7a7a"/><rect x="0" y="14" width="1" height="1" fill="#7a7a7a"/><rect x="0" y="16" width="1" height="1" fill="#7a7a7a"/><rect x="0" y="18" width="1" height="1" fill="#7a7a7a"/><rect x="0" y="20" width="1" height="1" fill="#7a7a7a"/><rect x="0" y="22" width="1" height="1" fill="#7a7a7a"/><rect x="0" y="24" width="1" height="1" fill="#7a7a7a"/><rect x="0" y="26" width="1" height="1" fill="#7a7a7a"/><rect x="0" y="28" width="1" height="1" fill="#7a7a7a"/><rect x="0" y="30" width="1" height="1" fill="#7a7a7a"/><rect x="0" y="32" width="1" height="1" fill="#7a7a7a"/><rect x="0" y="34" width="1" height="1" fill="#7a7a7a"/><rect x="0" y="36" width="1" height="1" fill="#7a7a7a"/><rect x="0" y="38" width="1" height="1" fill="#7a7a7a"/><rect x="0" y="40" width="1" height="1" fill="#7a7a7a"/><rect x="0" y="42" width="1" height="1" fill="#7a7a7a"/><rect x="0" y="44" width="1" height="1" fill="#7a7a7a"/><rect x="0" y="46" width="1" height="1" fill="#7a7a7a"/><rect x="0" y="48" width="1" height="1" fill="#7a7a7a"/><rect x="0" y="50" width="1" height="1" fill="#7a7a7a"/><rect x="0" y="52" width="1" height="1" fill="#7a7a7a"/><rect x="0" y="54" width="1" height="1" fill="#7a7a7a"/><rect x="0" y="56" width="1" height="1" fill="#7a7a7a"/><rect x="0" y="58" width="1" height="1" fill="#7a7a7a"/><rect x="0" y="60" width="1" height="1" fill="#7a7a7a"/><rect x="0" y="62" width="1" height="1" fill="#7a7a7a"/><rect x="0" y="64" width="1" height="1" fill="#7a7a7a"/><rect x="0" y="66" width="1" height="1" fill="#7a7a7a"/><rect x="0" y="68" width="1" height="1" fill="#7a7a7a"/><rect x="0" y="70" width="1" height="1" fill="#7a7a7a"/><rect x="0" y="72" width="1" height="1" fill="#7a7a7a"/><rect x="0" y="74" width="1" height="1" fill="#7a7a7a"/><rect x="0" y="76" width="1" height="1" fill="#7a7a7a"/><rect x="0" y="78" width="1" height="1" fill="#7a7a7a"/><rect x="0" y="80" width="1" height="1" fill="#7a7a7a"/><rect x="0" y="82" width="1" height="1" fill="#7a7a7a"/><rect x="0" y="84" width="1" height="1" fill="#7a7a7a"/><rect x="0" y="86" width="1" height="1" fill="#7a7a7a"/><rect x="0" y="88" width="1" height="1" fill="#7a7a7a"/><rect x="0" y="90" width="1" height="1" fill="#7a7a7a"/><rect x="0" y="92" width="1" height="1" fill="#7a7a7a"/><rect x="0" y="94" width="1" height="1" fill="#7a7a7a"/><rect x="0" y="96" width="1" height="1" fill="#7a7a7a"/><rect x="0" y="98" width="1" height="1" fill="#7a7a7a"/><rect x="0" y="100" width="1" height="1" fill="#7a7a7a"/><rect x="0" y="102" width="1" height="1" fill="#7a7a7a"/><rect x="0" y="104" width="1" height="1" fill="#7a7a7a"/><rect x="0" y="106" width="1" height="1" fill="#7a7a7a"/><rect x="0" y="108" width="1" height="1" fill="#7a7a7a"/><rect x="0" y="110" width="1" height="1" fill="#7a7a7a"/><rect x="0" y="112" width="1" height="1" fill="#7a7a7a"/><rect x="0" y="114" width="1" height="1" fill="#7a7a7a"/><rect x="0" y="116" width="1" height="1" fill="#7a7a7a"/><rect x="0" y="118" width="1" height="1" fill="#7a7a7a"/><rect x="0" y="120" width="1" height="1" fill="#7a7a7a"/><rect x="0" y="122" width="1" height="1" fill="#7a7a7a"/><rect x="0" y="124" width="1" height="1" fill="#7a7a7a"/><rect x="0" y="126" width="1" height="1" fill="#7a7a7a"/><rect x="0" y="128" width="1" height="1" fill="#7a7a7a"/><rect x="0" y="130" width="1" height="1" fill="#7a7a7a"/><rect x="0" y="132" width="1" height="1" fill="#7a7a7a"/><rect x="0" y="134" width="1" height="1" fill="#7a7a7a"/><rect x="0" y="136" width="1" height="1" fill="#7a7a7a"/><rect x="0" y="138" width="1" height="1" fill="#7a7a7a"/><rect x="0" y="140" width="1" height="1" fill="#7a7a7a"/><rect x="0" y="142" width="1" height="1" fill="#7a7a7a"/><rect x="0" y="144" width="1" height="1" fill="#7a7a7a"/><rect x="0" y="146" width="1" height="1" fill="#7a7a7a"/><rect x="0" y="148" width="1" height="1" fill="#7a7a7a"/><rect x="0" y="150" width="1" height="1" fill="#7a7a7a"/><rect x="0" y="152" width="1" height="1" fill="#7a7a7a"/></svg><svg style="position:absolute;left:146px;top:46px" width="10" height="1"><rect x="0" y="0" width="1" height="1" fill="#7a7a7a"/><rect x="2" y="0" width="1" height="1" fill="#7a7a7a"/><rect x="4" y="0" width="1" height="1" fill="#7a7a7a"/><rect x="6" y="0" width="1" height="1" fill="#7a7a7a"/><rect x="8" y="0" width="1" height="1" fill="#7a7a7a"/></svg><svg style="position:absolute;left:157px;top:37px" width="13" height="16"><rect x="0" y="0" width="12" height="16" fill="#f2c640"/><rect x="1" y="1" width="10" height="14" fill="#fde08a"/><rect x="10" y="9" width="3" height="7" fill="#eec54a"/><rect x="11" y="10" width="1" height="5" fill="#fde08a"/></svg><div class="t" style="left:176px;top:37px;;letter-spacing:-0.983px">!MUSTER</div><svg style="position:absolute;left:146px;top:64px" width="10" height="1"><rect x="0" y="0" width="1" height="1" fill="#7a7a7a"/><rect x="2" y="0" width="1" height="1" fill="#7a7a7a"/><rect x="4" y="0" width="1" height="1" fill="#7a7a7a"/><rect x="6" y="0" width="1" height="1" fill="#7a7a7a"/><rect x="8" y="0" width="1" height="1" fill="#7a7a7a"/></svg><svg style="position:absolute;left:157px;top:55px" width="13" height="16"><rect x="0" y="0" width="12" height="16" fill="#f2c640"/><rect x="1" y="1" width="10" height="14" fill="#fde08a"/><rect x="10" y="9" width="3" height="7" fill="#eec54a"/><rect x="11" y="10" width="1" height="5" fill="#fde08a"/></svg><div class="t" style="left:176px;top:55px;;letter-spacing:-0.433px">_resources</div><div style="position:absolute;left:153px;top:72px;width:72px;height:18px;background:#242424"></div><svg style="position:absolute;left:146px;top:82px" width="10" height="1"><rect x="0" y="0" width="1" height="1" fill="#7a7a7a"/><rect x="2" y="0" width="1" height="1" fill="#7a7a7a"/><rect x="4" y="0" width="1" height="1" fill="#7a7a7a"/><rect x="6" y="0" width="1" height="1" fill="#7a7a7a"/><rect x="8" y="0" width="1" height="1" fill="#7a7a7a"/></svg><svg style="position:absolute;left:157px;top:73px" width="13" height="16"><rect x="0" y="0" width="12" height="16" fill="#f2c640"/><rect x="1" y="1" width="10" height="14" fill="#fde08a"/><rect x="10" y="9" width="3" height="7" fill="#eec54a"/><rect x="11" y="10" width="1" height="5" fill="#fde08a"/></svg><div class="t" style="left:176px;top:73px;;letter-spacing:-0.062px">bravelife</div><svg style="position:absolute;left:146px;top:100px" width="10" height="1"><rect x="0" y="0" width="1" height="1" fill="#7a7a7a"/><rect x="2" y="0" width="1" height="1" fill="#7a7a7a"/><rect x="4" y="0" width="1" height="1" fill="#7a7a7a"/><rect x="6" y="0" width="1" height="1" fill="#7a7a7a"/><rect x="8" y="0" width="1" height="1" fill="#7a7a7a"/></svg><svg style="position:absolute;left:157px;top:91px" width="13" height="16"><rect x="0" y="0" width="12" height="16" fill="#f2c640"/><rect x="1" y="1" width="10" height="14" fill="#fde08a"/><rect x="10" y="9" width="3" height="7" fill="#eec54a"/><rect x="11" y="10" width="1" height="5" fill="#fde08a"/></svg><div class="t" style="left:176px;top:91px;;letter-spacing:-0.2px">bravelife2</div><svg style="position:absolute;left:146px;top:118px" width="10" height="1"><rect x="0" y="0" width="1" height="1" fill="#7a7a7a"/><rect x="2" y="0" width="1" height="1" fill="#7a7a7a"/><rect x="4" y="0" width="1" height="1" fill="#7a7a7a"/><rect x="6" y="0" width="1" height="1" fill="#7a7a7a"/><rect x="8" y="0" width="1" height="1" fill="#7a7a7a"/></svg><svg style="position:absolute;left:157px;top:109px" width="13" height="16"><rect x="0" y="0" width="12" height="16" fill="#f2c640"/><rect x="1" y="1" width="10" height="14" fill="#fde08a"/><rect x="10" y="9" width="3" height="7" fill="#eec54a"/><rect x="11" y="10" width="1" height="5" fill="#fde08a"/></svg><div class="t" style="left:176px;top:109px;;letter-spacing:0.033px">discord</div><svg style="position:absolute;left:146px;top:136px" width="10" height="1"><rect x="0" y="0" width="1" height="1" fill="#7a7a7a"/><rect x="2" y="0" width="1" height="1" fill="#7a7a7a"/><rect x="4" y="0" width="1" height="1" fill="#7a7a7a"/><rect x="6" y="0" width="1" height="1" fill="#7a7a7a"/><rect x="8" y="0" width="1" height="1" fill="#7a7a7a"/></svg><svg style="position:absolute;left:157px;top:127px" width="13" height="16"><rect x="0" y="0" width="12" height="16" fill="#f2c640"/><rect x="1" y="1" width="10" height="14" fill="#fde08a"/><rect x="10" y="9" width="3" height="7" fill="#eec54a"/><rect x="11" y="10" width="1" height="5" fill="#fde08a"/></svg><div class="t" style="left:176px;top:127px;;letter-spacing:0.135px">iven-dev-bewerbung</div><svg style="position:absolute;left:146px;top:154px" width="10" height="1"><rect x="0" y="0" width="1" height="1" fill="#7a7a7a"/><rect x="2" y="0" width="1" height="1" fill="#7a7a7a"/><rect x="4" y="0" width="1" height="1" fill="#7a7a7a"/><rect x="6" y="0" width="1" height="1" fill="#7a7a7a"/><rect x="8" y="0" width="1" height="1" fill="#7a7a7a"/></svg><svg style="position:absolute;left:157px;top:145px" width="13" height="16"><rect x="0" y="0" width="12" height="16" fill="#f2c640"/><rect x="1" y="1" width="10" height="14" fill="#fde08a"/><rect x="10" y="9" width="3" height="7" fill="#eec54a"/><rect x="11" y="10" width="1" height="5" fill="#fde08a"/></svg><div class="t" style="left:176px;top:145px;;letter-spacing:0.5px">pool</div><svg style="position:absolute;left:146px;top:172px" width="10" height="1"><rect x="0" y="0" width="1" height="1" fill="#7a7a7a"/><rect x="2" y="0" width="1" height="1" fill="#7a7a7a"/><rect x="4" y="0" width="1" height="1" fill="#7a7a7a"/><rect x="6" y="0" width="1" height="1" fill="#7a7a7a"/><rect x="8" y="0" width="1" height="1" fill="#7a7a7a"/></svg><svg style="position:absolute;left:157px;top:163px" width="13" height="16"><rect x="0" y="0" width="12" height="16" fill="#f2c640"/><rect x="1" y="1" width="10" height="14" fill="#fde08a"/><rect x="10" y="9" width="3" height="7" fill="#eec54a"/><rect x="11" y="10" width="1" height="5" fill="#fde08a"/></svg><div class="t" style="left:176px;top:163px;;letter-spacing:-0.14px">satoph</div><svg style="position:absolute;left:146px;top:190px" width="10" height="1"><rect x="0" y="0" width="1" height="1" fill="#7a7a7a"/><rect x="2" y="0" width="1" height="1" fill="#7a7a7a"/><rect x="4" y="0" width="1" height="1" fill="#7a7a7a"/><rect x="6" y="0" width="1" height="1" fill="#7a7a7a"/><rect x="8" y="0" width="1" height="1" fill="#7a7a7a"/></svg><svg style="position:absolute;left:157px;top:181px" width="13" height="16"><rect x="0" y="0" width="12" height="16" fill="#f2c640"/><rect x="1" y="1" width="10" height="14" fill="#fde08a"/><rect x="10" y="9" width="3" height="7" fill="#eec54a"/><rect x="11" y="10" width="1" height="5" fill="#fde08a"/></svg><div class="t" style="left:176px;top:181px;;letter-spacing:-0.25px">teamspeak</div></div><div style="position:absolute;left:0px;top:271px;width:929px;height:365px;box-sizing:border-box;border:1px solid #8b9098;background:#1a1a1a"></div><div style="position:absolute;left:2px;top:273px;width:925px;height:361px;background:#202020"></div><div style="position:absolute;left:212px;top:273px;width:1px;height:24px;background:#6a6a6a"></div><div style="position:absolute;left:282px;top:273px;width:1px;height:24px;background:#6a6a6a"></div><div style="position:absolute;left:432px;top:273px;width:1px;height:24px;background:#6a6a6a"></div><div style="position:absolute;left:511px;top:273px;width:1px;height:24px;background:#6a6a6a"></div><div style="position:absolute;left:573px;top:273px;width:1px;height:24px;background:#6a6a6a"></div><div class="t" style="left:8px;top:277px;;letter-spacing:0.133px">Name</div><svg style="position:absolute;left:104px;top:273px" width="8" height="5" viewBox="0 0 8 5"><path d="M0.5 4.5L3.8 0.8L7.2 4.5" stroke="#a0a0a0" stroke-width="1.1" fill="none"/></svg><div class="t" style="left:277px;top:277px;transform:translateX(-100%);letter-spacing:-0.6px">Größe</div><div class="t" style="left:289px;top:277px;;letter-spacing:-0.286px">Geändert</div><div class="t" style="left:439px;top:277px;;letter-spacing:-0.3px">Rechte</div><div class="t" style="left:518px;top:277px;;letter-spacing:-0.429px">Besitzer</div><div style="position:absolute;left:211px;top:297px;width:1px;height:337px;background:#444444"></div><div style="position:absolute;left:212px;top:297px;width:1px;height:337px;background:#1a2330"></div><div style="position:absolute;left:281px;top:297px;width:1px;height:337px;background:#444444"></div><div style="position:absolute;left:282px;top:297px;width:1px;height:337px;background:#1a2330"></div><div style="position:absolute;left:431px;top:297px;width:1px;height:337px;background:#444444"></div><div style="position:absolute;left:432px;top:297px;width:1px;height:337px;background:#1a2330"></div><div style="position:absolute;left:510px;top:297px;width:1px;height:337px;background:#444444"></div><div style="position:absolute;left:511px;top:297px;width:1px;height:337px;background:#1a2330"></div><div style="position:absolute;left:572px;top:297px;width:1px;height:337px;background:#444444"></div><div style="position:absolute;left:573px;top:297px;width:1px;height:337px;background:#1a2330"></div><div style="position:absolute;left:2px;top:297px;width:1px;height:337px;background:#7a7a7a"></div><div style="position:absolute;left:3px;top:297px;width:1px;height:337px;background:#18304e"></div><svg style="position:absolute;left:8px;top:298px" width="13" height="16" viewBox="0 0 13 16"><rect x="0" y="0" width="12" height="16" fill="#f2c640"/><rect x="1" y="1" width="10" height="14" fill="#fde08a"/><rect x="10" y="9" width="3" height="7" fill="#eec54a"/><rect x="11" y="10" width="1" height="5" fill="#fde08a"/><path d="M4.5 7L2 9.5H3.8V13.2H9.5V12.2H4.8V9.5H7Z" fill="#242838"/></svg><div style="position:absolute;left:23px;top:298px;width:11px;height:17px;box-sizing:border-box;border:1px dotted #d8d8d8"></div><div class="t" style="left:25px;top:299px;">..</div><div class="t" style="left:289px;top:299px;;letter-spacing:-0.628px">05.09.2021 01:14:30</div><div class="t" style="left:439px;top:299px;;letter-spacing:0.125px">rwxr-xr-x</div><div class="t" style="left:518px;top:299px;;letter-spacing:0.333px">root</div><svg style="position:absolute;left:8px;top:318px" width="12" height="15" viewBox="0 0 12 15"><path d="M0.5 0.5H7.5L11.5 4.5V14.5H0.5Z" fill="#f8f8f8" stroke="#d0d0d0"/><path d="M7.5 0.5V4.5H11.5" fill="#e0e0e0" stroke="#c0c0c0"/><path d="M2 8.5C2 6 4.5 5.5 5.8 7C7 5.5 9.8 6 9.8 8.5C9.8 10.5 8.5 11 7.5 10.2V11.5H6.5V10.5C6 10.8 5.5 10.8 5 10.5V11.5H4V10.2C3 10.8 2 10.3 2 8.5Z" fill="#8c6cc4"/></svg><div class="t" style="left:24px;top:318px;;letter-spacing:0.037px">index.php</div><div class="t" style="left:274px;top:318px;transform:translateX(-100%);letter-spacing:-1.075px">38 KB</div><div class="t" style="left:289px;top:318px;;letter-spacing:-0.628px">05.09.2021 00:55:32</div><div class="t" style="left:439px;top:318px;;letter-spacing:0.525px">rw-r--r--</div><div class="t" style="left:518px;top:318px;;letter-spacing:0.333px">root</div><div style="position:absolute;left:0px;top:636px;width:929px;height:20px;background:#232323"></div><div class="t" style="left:3px;top:640px;;letter-spacing:-0.36px">0 B von 37,1 KB in 0 von 1</div>
</body></html>
